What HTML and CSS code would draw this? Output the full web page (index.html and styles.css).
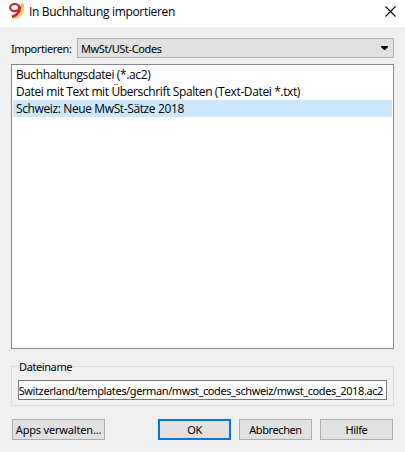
FILE: index.html
```html
<!DOCTYPE html>
<html lang="de">
<head>
<meta charset="utf-8">
<title>In Buchhaltung importieren</title>
<link rel="stylesheet" href="styles.css">
</head>
<body>
<header class="titlebar">
  <svg class="logo" width="18" height="18" viewBox="0 0 18 18">
    <path d="M13.500 2L15 1.500C17.500 8 14 16 5.500 16.500L4.500 15C11 13 14 9 13.500 2Z" fill="#efd276" stroke="#e3bd55" stroke-width=".9"/>
    <ellipse cx="6.700" cy="5.600" rx="4.600" ry="3.600" fill="#fff" stroke="#cf2030" stroke-width="2.200"/>
    <path d="M11 3.500C13 8.500 10 13 4 14.700" fill="none" stroke="#cf2030" stroke-width="2.600"/>
  </svg>
  <h1 class="title">In Buchhaltung importieren</h1>
  <svg class="close" width="11" height="11" viewBox="0 0 11 11"><path d="M.5.5l10 10M10.500.5l-10 10" stroke="#000" stroke-width="1.100"/></svg>
</header>
<main class="dialog">
  <div class="import-row">
    <span class="import-label">Importieren:</span>
    <div class="combo"><span class="combo-text">MwSt/USt-Codes</span>
      <svg width="7" height="4" viewBox="0 0 7 4"><path d="M0 0h7v1L4 4H3L0 1z" fill="#000"/></svg>
    </div>
  </div>
  <ul class="list">
    <li>Buchhaltungsdatei (*.ac2)</li>
    <li>Datei mit Text mit Überschrift Spalten (Text-Datei *.txt)</li>
    <li class="selected">Schweiz: Neue MwSt-Sätze 2018</li>
  </ul>
  <section class="group">
    <h2 class="legend">Dateiname</h2>
    <div class="field"><span class="path">Switzerland/templates/german/mwst_codes_schweiz/mwst_codes_2018.ac2</span></div>
  </section>
  <footer class="buttons">
    <button class="apps"><span>Apps verwalten...</span></button>
    <button class="ok"><span>OK</span></button>
    <button class="cancel"><span>Abbrechen</span></button>
    <button class="help"><span>Hilfe</span></button>
  </footer>
</main>
</body>
</html>
```
FILE: styles.css
```css
* { box-sizing: border-box; }
body {
  margin: 0;
  width: 405px;
  height: 452px;
  overflow: hidden;
  background: #f0f0f0;
  color: #000;
  font: 11px/14px "Noto Sans", "Open Sans", sans-serif;
  letter-spacing: -0.4px;
  white-space: nowrap;
}
.titlebar {
  display: flex;
  height: 27px;
  padding: 2px 9px 0 8px;
  background: #fff;
}
.logo { flex: none; }
.title {
  flex: 1;
  margin: 1px 0 0 3px;
  font: 12px/18px "Open Sans", sans-serif;
  letter-spacing: -0.32px;
}
.close { margin-top: 4px; }
.dialog { padding: 11px 11px 0; }
.import-row { display: flex; height: 20px; }
.import-label { width: 66px; line-height: 21px; }
.combo {
  display: flex;
  flex: 1;
  align-items: center;
  justify-content: space-between;
  padding: 0 5px 0 3px;
  border: 1px solid #adadad;
  background: #e1e1e1;
}
.combo-text { padding-top: 1px; }
.list {
  height: 285px;
  margin: 6px 0 0;
  padding: 1px;
  border: 1px solid #828790;
  background: #fff;
  list-style: none;
  font: 12px/17px "Open Sans", sans-serif;
  letter-spacing: -0.38px;
}
.list li { height: 17px; padding-left: 3px; }
.list .selected { background: #cce8ff; }
.group {
  height: 40px;
  margin-top: 17px;
  padding: 0 6px;
  border: 1px solid #dcdcdc;
}
.legend {
  width: 54px;
  margin: -7px 0 0;
  padding-left: 1px;
  background: #f0f0f0;
  font: inherit;
}
.field {
  display: flex;
  justify-content: flex-end;
  height: 20px;
  margin-top: 6px;
  padding-right: 3px;
  border: 1px solid #7a7a7a;
  background: #fff;
  line-height: 20px;
  overflow: hidden;
}
.buttons { display: flex; gap: 8px; margin: 13px 1px 0; }
button {
  width: 73px;
  height: 21px;
  padding: 0;
  border: 1px solid #adadad;
  background: #e1e1e1;
  color: #000;
  font: inherit;
  letter-spacing: inherit;
}
.apps { width: 93px; margin-right: 45px; letter-spacing: -0.18px; }
.ok { border: 2px solid #0078d7; }
```
